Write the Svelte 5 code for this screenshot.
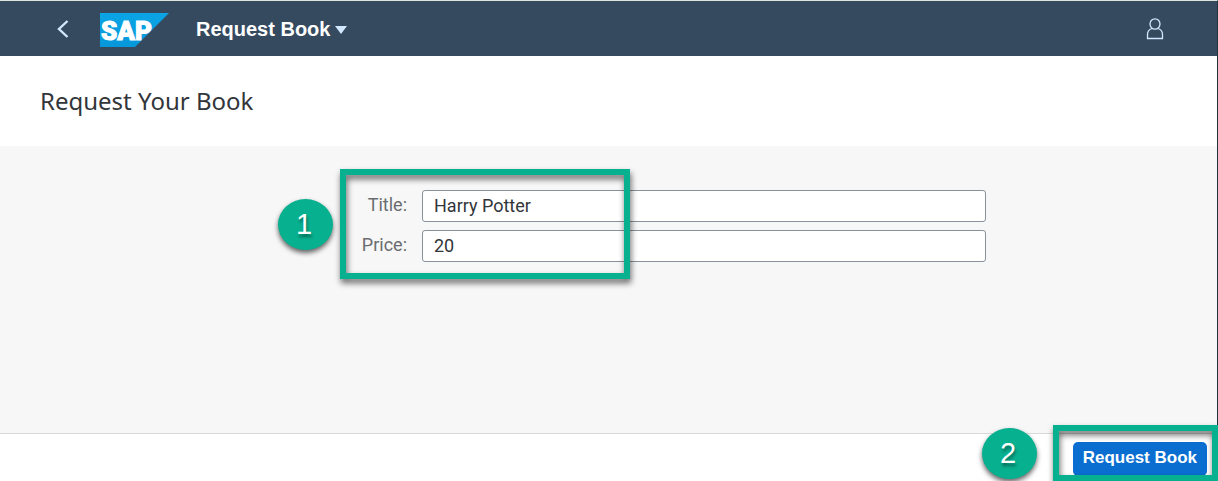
<script>
  let title = $state('Harry Potter');
  let price = $state('20');
</script>

<div class="page">
  <header class="shell">
    <button class="icon back" aria-label="Back">
      <svg width="14" height="20" viewBox="0 0 14 20"><path d="M11.500 2 3 10l8.500 8" fill="none" stroke="#d1e8ff" stroke-width="2.400" /></svg>
    </button>
    <a class="logo" href="#home" aria-label="SAP home">
      <svg width="69" height="34" viewBox="0 0 69 34">
        <defs>
          <linearGradient id="logo-fill" x1="0" y1="0" x2="0" y2="1">
            <stop offset="0" stop-color="#0aa5e5" />
            <stop offset="1" stop-color="#0797da" />
          </linearGradient>
        </defs>
        <path d="M0 0h69L35 34H0z" fill="url(#logo-fill)" />
        <text x="1" y="27" class="mark">SAP</text>
      </svg>
    </a>
    <button class="app-title">
      Request Book
      <svg width="12" height="8" viewBox="0 0 12 8"><path d="M0 0h12L6 8z" fill="#d1e8ff" /></svg>
    </button>
    <button class="icon user" aria-label="User">
      <svg width="18" height="22" viewBox="0 0 18 22" fill="none" stroke="#d1e8ff" stroke-width="1.300">
        <ellipse cx="9" cy="6" rx="5" ry="5.200" />
        <path d="M6 10.500C3 11.500 1.500 13.500 1.500 16.500v4h15v-4c0-3-1.500-5-4.500-6" />
      </svg>
    </button>
  </header>

  <div class="heading"><h1>Request Your Book</h1></div>

  <main>
    <form id="book-form">
      <label for="title">Title:</label>
      <input id="title" bind:value={title} />
      <label for="price">Price:</label>
      <input id="price" bind:value={price} />
    </form>
    <div class="frame form-frame"></div>
    <span class="badge form-badge">1</span>
  </main>

  <footer>
    <button class="submit" form="book-form" type="button">Request Book</button>
    <div class="frame submit-frame"></div>
    <span class="badge submit-badge">2</span>
  </footer>
</div>

<style>
  :global(body) { margin: 0; background: #fff; }
  .page {
    position: relative;
    display: flex;
    flex-direction: column;
    min-height: 100vh;
    box-sizing: border-box;
    overflow: hidden;
    font-family: "Roboto", "Liberation Sans", sans-serif;
    color: #32363a;
  }
  button { border: 0; margin: 0; padding: 0; font: inherit; cursor: pointer; }
  svg { display: block; }
  .shell {
    display: flex;
    align-items: center;
    height: 55px;
    padding: 0 53px 0 56px;
    border-top: 1px solid #dce4dc;
    border-right: 1px solid #1f3440;
    background: #354a5f;
  }
  .icon, .app-title { background: none; }
  .logo { margin: 3px 0 0 30px; }
  .mark {
    font: 900 26px "Roboto", sans-serif;
    fill: #fff;
    stroke: #fff;
    stroke-width: 1px;
  }
  .app-title {
    display: flex;
    align-items: center;
    gap: 5px;
    margin-left: 27px;
    padding-top: 2px;
    color: #fff;
    font: 700 20px "Liberation Sans", sans-serif;
  }
  .user { margin-left: auto; }
  .heading {
    display: flex;
    align-items: center;
    height: 88px;
    padding: 0 40px 2px;
    border-right: 1px solid #1f3440;
  }
  h1 { margin: 0; font: 400 24px "Noto Sans", sans-serif; }
  main {
    position: relative;
    flex: 1;
    padding-top: 44px;
    background: #f7f7f7;
    border-right: 1px solid #1f3440;
  }
  form {
    display: grid;
    grid-template-columns: 407fr 564fr 216fr;
    column-gap: 15px;
    row-gap: 8px;
    font-size: 18px;
  }
  label {
    grid-column: 1;
    justify-self: end;
    line-height: 30px;
    color: #6a6d70;
  }
  input {
    grid-column: 2;
    box-sizing: border-box;
    min-width: 0;
    width: 100%;
    height: 32px;
    padding: 0 11px 2px;
    border: 1px solid #89919a;
    border-radius: 3px;
    background: #fff;
    color: #32363a;
    font: inherit;
  }
  footer {
    position: relative;
    display: flex;
    justify-content: flex-end;
    height: 39px;
    padding: 8px 11px 0;
    border-top: 1px solid #d9d9d9;
    background: #fff;
  }
  .submit {
    height: 34px;
    padding: 0 10px 2px;
    border-radius: 5px;
    background: #0a6ed1;
    color: #fff;
    font: 700 17px "Liberation Sans", sans-serif;
  }
  .frame {
    position: absolute;
    box-sizing: border-box;
    border: 6px solid #07b08f;
    filter: drop-shadow(1px 4px 3px rgba(0, 0, 0, 0.6));
    pointer-events: none;
  }
  .form-frame { left: 340px; top: 23px; width: 290px; height: 110px; }
  .submit-frame { right: 0; top: -9px; width: 165px; height: 56px; }
  .badge {
    position: absolute;
    box-sizing: border-box;
    width: 55px;
    height: 51px;
    padding-right: 3px;
    border-radius: 50%;
    background: #07b08f;
    box-shadow: 0 3px 5px rgba(0, 0, 0, 0.6);
    color: #fff;
    font: 29px/51px "Liberation Sans", sans-serif;
    text-align: center;
    text-shadow: 1px 3px 3px rgba(0, 0, 0, 0.4);
  }
  .form-badge { left: 278px; top: 53px; }
  .submit-badge { right: 181px; top: -6px; }
</style>
